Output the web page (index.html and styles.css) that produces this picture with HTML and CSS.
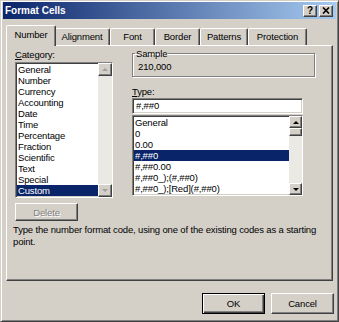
FILE: index.html
```html
<!DOCTYPE html>
<html lang="en">
<head>
    <meta charset="UTF-8">
    <meta name="viewport" content="width=device-width, initial-scale=1.0">
    <title>Format Cells</title>
    <link rel="stylesheet" href="styles.css">
</head>
<body>
    <div class="window">
        <div class="titlebar">
            <span class="title">Format Cells</span>
            <div class="caption-buttons">
                <span class="cap-btn raised">?</span>
                <span class="cap-btn raised">
                    <svg width="8" height="7" viewBox="0 0 8 7"><path d="M1 0.5 L7 6.5 M7 0.5 L1 6.5" stroke="#000" stroke-width="1.6"/></svg>
                </span>
            </div>
        </div>

        <div class="tabs">
            <div class="tab tab-active tab-number">Number</div>
            <div class="tab tab-alignment">Alignment</div>
            <div class="tab tab-font">Font</div>
            <div class="tab tab-border">Border</div>
            <div class="tab tab-patterns">Patterns</div>
            <div class="tab tab-protection">Protection</div>
        </div>

        <div class="panel">
            <div class="main">
                <div class="col-left">
                    <div class="label"><u>C</u>ategory:</div>
                    <div class="listbox sunken">
                        <ul class="items">
                            <li class="item">General</li>
                            <li class="item">Number</li>
                            <li class="item">Currency</li>
                            <li class="item">Accounting</li>
                            <li class="item">Date</li>
                            <li class="item">Time</li>
                            <li class="item">Percentage</li>
                            <li class="item">Fraction</li>
                            <li class="item">Scientific</li>
                            <li class="item">Text</li>
                            <li class="item">Special</li>
                            <li class="item item-selected">Custom</li>
                        </ul>
                        <div class="scrollbar scrollbar-wide">
                            <div class="sb-btn raised"><span class="arrow-up arrow-disabled"></span></div>
                            <div class="sb-track"></div>
                            <div class="sb-btn raised"><span class="arrow-down arrow-disabled"></span></div>
                        </div>
                    </div>
                </div>

                <div class="col-right">
                    <fieldset class="sample">
                        <legend>Sample</legend>
                        <div class="sample-value">210,000</div>
                    </fieldset>
                    <div class="label label-type"><u>T</u>ype:</div>
                    <div class="textbox sunken">#,##0</div>
                    <div class="listbox listbox-type sunken">
                        <ul class="items">
                            <li class="item">General</li>
                            <li class="item">0</li>
                            <li class="item">0.00</li>
                            <li class="item item-selected">#,##0</li>
                            <li class="item">#,##0.00</li>
                            <li class="item">#,##0_);(#,##0)</li>
                            <li class="item">#,##0_);[Red](#,##0)</li>
                        </ul>
                        <div class="scrollbar">
                            <div class="sb-btn raised"><span class="arrow-up"></span></div>
                            <div class="sb-thumb raised"></div>
                            <div class="sb-track"></div>
                            <div class="sb-btn raised"><span class="arrow-down"></span></div>
                        </div>
                    </div>
                </div>
            </div>

            <button class="btn btn-delete raised" disabled>Delete</button>
            <p class="desc">Type the number format code, using one of the existing codes as a starting point.</p>
        </div>

        <div class="footer">
            <button class="btn btn-default">OK</button>
            <button class="btn raised">Cancel</button>
        </div>
    </div>
</body>
</html>
```

FILE: styles.css
```css
* { box-sizing: border-box; }
body { margin: 0; background: #d4d0c8; font-family: "Liberation Sans", Arial, sans-serif; font-size: 9.5px; letter-spacing: -0.15px; color: #000; }

.raised { border: 1px solid; border-color: #fff #404040 #404040 #fff; box-shadow: inset -1px -1px #808080; background: #d4d0c8; }
.sunken { border: 1px solid; border-color: #808080 #fff #fff #808080; box-shadow: inset 1px 1px #404040, inset -1px -1px #d4d0c8; }

.window { width: 339px; height: 322px; background: #d4d0c8; padding: 1px 2px; border: 1px solid; border-color: #d4d0c8 #404040 #404040 #d4d0c8; box-shadow: inset 1px 1px #fff, inset -1px -1px #808080; }

/* title bar */
.titlebar { height: 17px; display: flex; align-items: center; justify-content: space-between; padding: 0 3px 0 2px; background: linear-gradient(to right, #0a246a, #a6caf0); }
.title { color: #fff; font-weight: bold; font-size: 10px; letter-spacing: 0; }
.caption-buttons { display: flex; gap: 2px; }
.cap-btn { width: 14px; height: 12px; display: flex; align-items: center; justify-content: center; font-weight: bold; font-size: 10px; line-height: 10px; }

/* tabs */
.tabs { display: flex; align-items: flex-end; height: 20px; margin-top: 6px; padding-left: 5px; position: relative; z-index: 1; }
.tab { height: 17px; line-height: 15px; text-align: center; border: 1px solid; border-bottom: none; border-color: #fff #404040 transparent #fff; border-radius: 2px 2px 0 0; box-shadow: inset -1px 0 #808080; background: #d4d0c8; }
.tab-active { height: 21px; line-height: 18px; margin: 0 -2px -1px; position: relative; z-index: 1; }
.tab-number { width: 50px; }
.tab-alignment { width: 56px; }
.tab-font { width: 45px; }
.tab-border { width: 45px; }
.tab-patterns { width: 48px; }
.tab-protection { width: 59px; }

/* panel */
.panel { margin: 0 3px; height: 236px; padding: 3px 6px 0 6px; border: 1px solid; border-color: #fff #404040 #404040 #fff; box-shadow: inset -1px -1px #808080; }
.main { display: flex; gap: 19px; margin-left: 2px; }
.col-left { width: 98px; }
.col-right { width: 183px; margin-top: -1px; }
.label { height: 11px; line-height: 11px; margin-bottom: 2px; }
.label-type { margin: 9px 0 1px; }

.listbox { display: flex; height: 136px; background: #fff; }
.listbox-type { width: 171px; height: 81px; margin-top: 1px; }
.items { flex: 1; list-style: none; margin: 0; padding: 1px 0 0 1px; overflow: hidden; }
.item { height: 11px; line-height: 11px; padding-left: 1px; white-space: nowrap; }
.item-selected { background: #0a246a; color: #fff; }

.scrollbar { width: 13px; display: flex; flex-direction: column; background: #ebe9e4; }
.scrollbar-wide { width: 14px; }
.sb-btn { height: 12px; display: flex; align-items: center; justify-content: center; }
.scrollbar-wide .sb-btn { height: 13px; }
.sb-thumb { height: 8px; }
.sb-track { flex: 1; }
.arrow-up { width: 0; height: 0; border-left: 3px solid transparent; border-right: 3px solid transparent; border-bottom: 3px solid #000; }
.arrow-down { width: 0; height: 0; border-left: 3px solid transparent; border-right: 3px solid transparent; border-top: 3px solid #000; }
.arrow-up.arrow-disabled { border-bottom-color: #a0a0a0; }
.arrow-down.arrow-disabled { border-top-color: #a0a0a0; }

.sample { margin: 0; padding: 2px 5px 4px; min-width: 0; border: 1px solid #808080; box-shadow: inset 1px 1px #fff, 1px 1px #fff; }
.sample legend { padding: 0 1px; margin-left: -3px; line-height: 11px; }
.sample-value { height: 11px; line-height: 11px; }

.textbox { width: 171px; height: 16px; line-height: 14px; padding-left: 3px; background: #fff; }

/* buttons */
.btn { font-family: inherit; font-size: 9.5px; letter-spacing: -0.15px; color: #000; width: 63px; height: 21px; padding: 0; }
.btn-delete { display: block; height: 18px; margin: 5px 0 0 2px; color: #808080; text-shadow: 1px 1px #fff; }
.btn-default { border: 1px solid #000; background: #d4d0c8; box-shadow: inset 1px 1px #fff, inset -1px -1px #404040, inset -2px -2px #808080; }

.desc { margin: 3px 0 0; line-height: 12px; }

.footer { display: flex; justify-content: flex-end; gap: 6px; margin-top: 12px; padding-right: 2px; }
```
